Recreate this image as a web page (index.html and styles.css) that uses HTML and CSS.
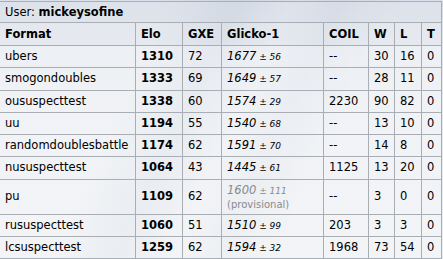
FILE: index.html
```html
<!DOCTYPE html>
<html>
<head>
<meta charset="utf-8">
<link rel="stylesheet" href="styles.css">
</head>
<body>
<table class="ladder">
  <colgroup>
    <col class="c-format"><col class="c-elo"><col class="c-gxe"><col class="c-glicko"><col class="c-coil"><col class="c-w"><col class="c-l"><col class="c-t">
  </colgroup>
  <tr class="user-row"><th colspan="8">User: <strong>mickeysofine</strong></th></tr>
  <tr class="head-row"><th>Format</th><th>Elo</th><th>GXE</th><th>Glicko-1</th><th>COIL</th><th>W</th><th>L</th><th>T</th></tr>
  <tr><td>ubers</td><td class="elo">1310</td><td>72</td><td class="glicko"><em>1677</em><small> ± 56</small></td><td class="dash">--</td><td>30</td><td>16</td><td>0</td></tr>
  <tr><td>smogondoubles</td><td class="elo">1333</td><td>69</td><td class="glicko"><em>1649</em><small> ± 57</small></td><td class="dash">--</td><td>28</td><td>11</td><td>0</td></tr>
  <tr><td>oususpecttest</td><td class="elo">1338</td><td>60</td><td class="glicko"><em>1574</em><small> ± 29</small></td><td>2230</td><td>90</td><td>82</td><td>0</td></tr>
  <tr><td>uu</td><td class="elo">1194</td><td>55</td><td class="glicko"><em>1540</em><small> ± 68</small></td><td class="dash">--</td><td>13</td><td>10</td><td>0</td></tr>
  <tr><td>randomdoublesbattle</td><td class="elo">1174</td><td>62</td><td class="glicko"><em>1591</em><small> ± 70</small></td><td class="dash">--</td><td>14</td><td>8</td><td>0</td></tr>
  <tr><td>nususpecttest</td><td class="elo">1064</td><td>43</td><td class="glicko"><em>1445</em><small> ± 61</small></td><td>1125</td><td>13</td><td>20</td><td>0</td></tr>
  <tr><td>pu</td><td class="elo">1109</td><td>62</td><td class="glicko prov"><em>1600</em><small> ± 111</small><span class="prov-note">(provisional)</span></td><td class="dash">--</td><td>3</td><td>0</td><td>0</td></tr>
  <tr><td>rususpecttest</td><td class="elo">1060</td><td>51</td><td class="glicko"><em>1510</em><small> ± 99</small></td><td>203</td><td>3</td><td>3</td><td>0</td></tr>
  <tr><td>lcsuspecttest</td><td class="elo">1259</td><td>62</td><td class="glicko"><em>1594</em><small> ± 32</small></td><td>1968</td><td>73</td><td>54</td><td>0</td></tr>
</table>
</body>
</html>
```
FILE: styles.css
```css
html, body {
  margin: 0;
  padding: 0;
}
body {
  width: 443px;
  height: 259px;
  overflow: hidden;
  font-family: "DejaVu Sans", Verdana, sans-serif;
  font-size: 11.5px;
  color: #000;
  background:
    linear-gradient(115deg, rgba(255,255,255,0) 30%, rgba(150,165,190,0.18) 42%, rgba(255,255,255,0) 52%, rgba(150,165,190,0.12) 60%, rgba(255,255,255,0) 70%),
    linear-gradient(180deg, #d9dfe8 0%, #e4e8ee 40%, #e9ecf0 100%);
}
.ladder {
  border-collapse: separate;
  border-spacing: 0;
  table-layout: fixed;
  width: 442px;
  margin: 1px 0 0 0;
  border-top: 1px solid #a9aeb5;
}
.c-format { width: 136px; }
.c-elo { width: 47px; }
.c-gxe { width: 39px; }
.c-glicko { width: 102px; }
.c-coil { width: 45px; }
.c-w { width: 26px; }
.c-l { width: 27px; }
.c-t { width: 20px; }

.ladder th, .ladder td {
  border-right: 1px solid #a9aeb5;
  border-bottom: 1px solid #a9aeb5;
  padding: 3px 4px 3px 5px;
  line-height: 15.25px;
  text-align: left;
  white-space: nowrap;
  vertical-align: middle;
}
.ladder td {
  background: rgba(255,255,255,0.45);
}
.user-row th {
  font-weight: normal;
  line-height: 16px;
  padding-top: 2px;
  padding-bottom: 2px;
  background: rgba(255,255,255,0.12);
}
.user-row th strong { font-weight: bold; }
.head-row th {
  font-weight: bold;
  line-height: 16px;
  background: rgba(255,255,255,0.25);
}
.elo { font-weight: bold; }
.glicko em { font-style: italic; }
.glicko small {
  font-style: italic;
  font-size: 9px;
  line-height: 1;
}
.prov { color: #8a8a8a; }
.prov-note {
  display: block;
  font-size: 10px;
  font-style: normal;
  line-height: 13px;
}
```
